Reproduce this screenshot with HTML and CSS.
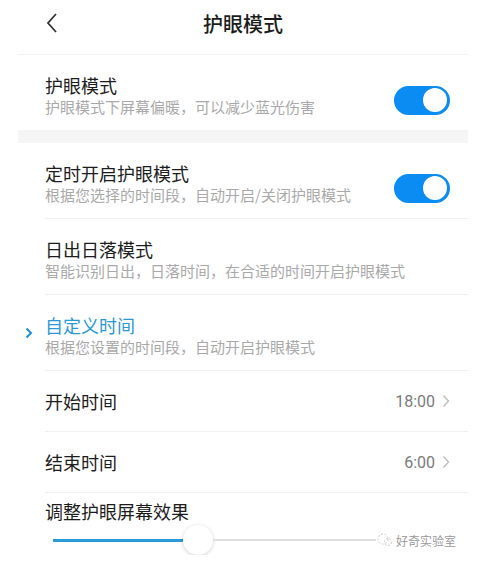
FILE: index.html
```html
<!DOCTYPE html>
<html>

<head>
    <meta name="viewport" content="width=device-width, initial-scale=1.0">
    <title>护眼模式</title>
    <link rel="stylesheet" href="styles.css">
</head>

<body>
  <div class="page">

    <header class="top">
      <svg class="back" width="14" height="22" viewBox="0 0 14 22"><path d="M11 2 L3 11 L11 20" fill="none" stroke="#333" stroke-width="1.8"/></svg>
      <h1>护眼模式</h1>
      <span class="back-space"></span>
    </header>

    <div class="row">
      <div class="gutter"></div>
      <div class="row-body last">
        <div class="txt">
          <p class="title">护眼模式</p>
          <p class="sub">护眼模式下屏幕偏暖，可以减少蓝光伤害</p>
        </div>
        <span class="switch"><span class="knob"></span></span>
      </div>
    </div>

    <div class="band"></div>

    <div class="row">
      <div class="gutter"></div>
      <div class="row-body">
        <div class="txt">
          <p class="title">定时开启护眼模式</p>
          <p class="sub">根据您选择的时间段，自动开启/关闭护眼模式</p>
        </div>
        <span class="switch"><span class="knob"></span></span>
      </div>
    </div>

    <div class="row">
      <div class="gutter"></div>
      <div class="row-body">
        <div class="txt">
          <p class="title">日出日落模式</p>
          <p class="sub">智能识别日出，日落时间，在合适的时间开启护眼模式</p>
        </div>
      </div>
    </div>

    <div class="row">
      <div class="gutter">
        <svg class="mark" width="8" height="12" viewBox="0 0 8 12"><path d="M1.5 1.5 L6 6 L1.5 10.5" fill="none" stroke="#1f8fd6" stroke-width="2"/></svg>
      </div>
      <div class="row-body">
        <div class="txt">
          <p class="title blue">自定义时间</p>
          <p class="sub">根据您设置的时间段，自动开启护眼模式</p>
        </div>
      </div>
    </div>

    <div class="row">
      <div class="gutter"></div>
      <div class="row-body short">
        <p class="title">开始时间</p>
        <span class="value">18:00
          <svg width="8" height="14" viewBox="0 0 8 14"><path d="M1.5 1.5 L6.5 7 L1.5 12.5" fill="none" stroke="#bbb" stroke-width="1.3"/></svg>
        </span>
      </div>
    </div>

    <div class="row">
      <div class="gutter"></div>
      <div class="row-body short">
        <p class="title">结束时间</p>
        <span class="value">6:00
          <svg width="8" height="14" viewBox="0 0 8 14"><path d="M1.5 1.5 L6.5 7 L1.5 12.5" fill="none" stroke="#bbb" stroke-width="1.3"/></svg>
        </span>
      </div>
    </div>

    <div class="effect">
      <p class="title">调整护眼屏幕效果</p>
      <div class="slider">
        <div class="track">
          <span class="fill"></span>
          <span class="thumb"></span>
          <span class="rest"></span>
        </div>
        <span class="mark-wm">
          <svg width="18" height="14" viewBox="0 0 18 14"><circle cx="7" cy="6" r="5" fill="none" stroke="#ccc" stroke-width="1" stroke-dasharray="2 1.5"/><circle cx="12" cy="9" r="3.5" fill="none" stroke="#ccc" stroke-width="1" stroke-dasharray="2 1.5"/></svg>
          好奇实验室
        </span>
      </div>
    </div>

  </div>
</body>

</html>
```

FILE: styles.css
```css
body {
    margin: 0;
    background: #fff;
    font-family: "Noto Sans CJK SC", "Noto Sans", sans-serif;
    color: #1c1c1c;
}

p {
    margin: 0;
}

.page {
    width: 450px;
    margin-left: 18px;
}

.top {
    height: 54px;
    display: flex;
    align-items: center;
    justify-content: space-between;
    padding: 0 27px;
    border-bottom: 1px solid #f2f2f2;
}

.top h1 {
    margin: 0 0 6px 0;
    font-size: 20px;
    font-weight: 500;
    line-height: 28px;
}

.back {
    margin-bottom: 8px;
}

.back-space {
    width: 14px;
}

.row {
    display: flex;
}

.gutter {
    width: 27px;
    display: flex;
    align-items: center;
    justify-content: flex-end;
    box-sizing: border-box;
    padding-right: 12px;
}

.row-body {
    flex: 1;
    display: flex;
    align-items: center;
    justify-content: space-between;
    padding: 18px 18px 13px 0;
    border-bottom: 1px solid #efefef;
}

.row-body.last {
    border-bottom: none;
}

.row-body.short {
    padding: 18px 18px 18px 0;
}

.title {
    font-size: 18px;
    line-height: 24px;
    color: #1c1c1c;
}

.title.blue {
    color: #2b98d6;
}

.sub {
    font-size: 15px;
    line-height: 20px;
    color: #a9a9a9;
}

.switch {
    width: 56px;
    height: 29px;
    border-radius: 15px;
    background: #0b8cf2;
    display: flex;
    align-items: center;
    justify-content: flex-end;
    padding-right: 3px;
    box-sizing: border-box;
    margin-top: 10px;
}

.knob {
    width: 24px;
    height: 24px;
    border-radius: 50%;
    background: #fff;
}

.value {
    font-family: Roboto, "Noto Sans", sans-serif;
    font-size: 16px;
    color: #7a7a7a;
    display: flex;
    align-items: center;
    gap: 7px;
}

.band {
    height: 13px;
    background: #f5f5f5;
}

.effect {
    padding: 6px 0 0 27px;
}

.slider {
    display: flex;
    align-items: center;
    height: 30px;
    margin-top: 2px;
    padding-left: 8px;
}

.track {
    flex: 1;
    display: flex;
    align-items: center;
}

.fill {
    width: 130px;
    height: 3px;
    background: #2a9ad8;
}

.thumb {
    width: 30px;
    height: 30px;
    border-radius: 50%;
    background: #fff;
    box-shadow: 0 1px 4px rgba(0, 0, 0, 0.18);
}

.rest {
    flex: 1;
    height: 2px;
    background: #dedede;
}

.mark-wm {
    display: flex;
    align-items: center;
    gap: 2px;
    font-size: 12px;
    color: #9a9a9a;
    padding-right: 12px;
}
```
